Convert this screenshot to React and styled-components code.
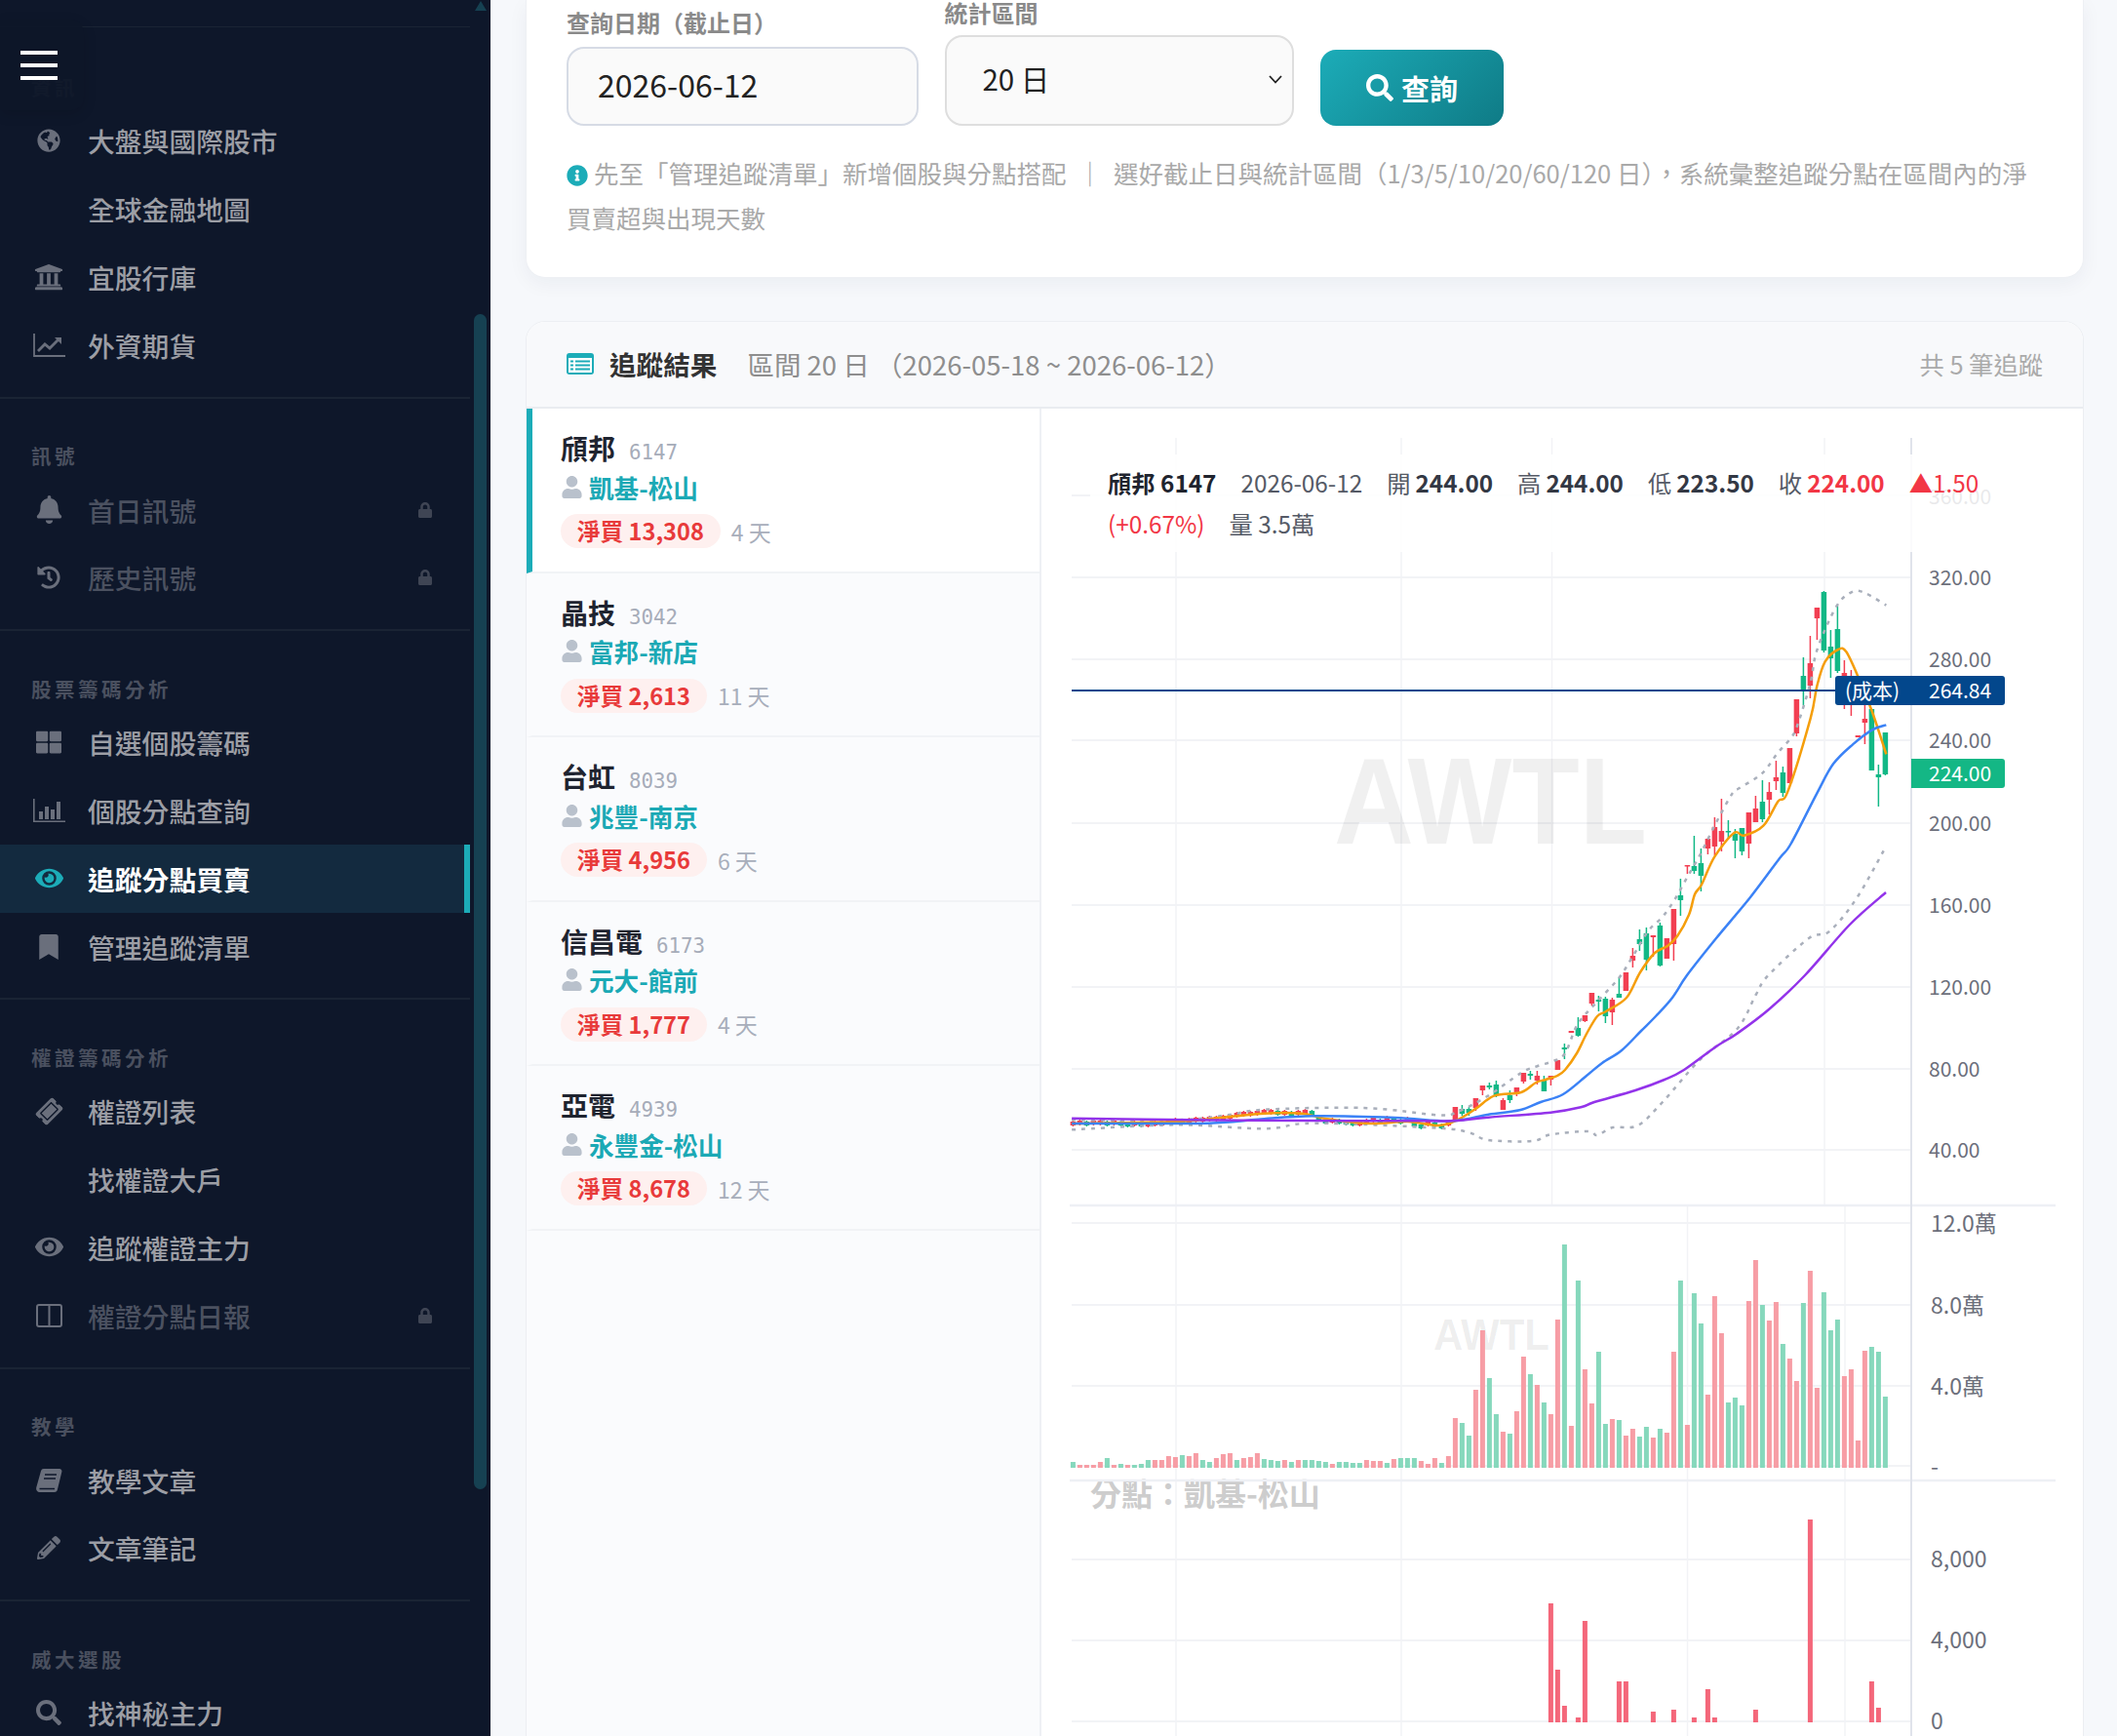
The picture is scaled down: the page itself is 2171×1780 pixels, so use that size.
import React from 'react';
import styled, { createGlobalStyle } from 'styled-components';
import {
  FaBell, FaBookmark, FaEye, FaGlobeAmericas, FaHistory, FaInfoCircle, FaLock,
  FaPencilAlt, FaSearch, FaThLarge, FaTicketAlt, FaUniversity, FaUser,
} from 'react-icons/fa';

const GlobalStyle = createGlobalStyle`
  html, body {
    margin: 0;
    background: #f6f8fb;
    overflow: hidden;
    font-family: "Noto Sans CJK TC", "Noto Sans", "Liberation Sans", sans-serif;
  }
  * { box-sizing: border-box; }
`;

const Page = styled.div`
  display: flex;
  width: 2171px;
  height: 1780px;
  overflow: hidden;
`;

/* ---------- sidebar ---------- */

const Sidebar = styled.aside`
  position: relative;
  flex: 0 0 503px;
  display: flex;
  height: 100%;
  background: #0e172a;
  overflow: hidden;
`;

const Nav = styled.nav`
  flex: 0 0 482px;
  padding-top: 27px;
`;

const NavSection = styled.section`
  padding: ${(p) => (p.$first ? '50px' : '47.5px')} 0 17.5px;
  border-top: ${(p) => (p.$first ? '1px solid #1a2434' : 'none')};
  border-bottom: 2px solid #1a2434;
`;

const NavLabel = styled.div`
  height: 22px;
  margin-bottom: 10px;
  padding-left: 32px;
  font-size: 20.5px;
  line-height: 22px;
  font-weight: 700;
  letter-spacing: 3.5px;
  color: #4a505f;
`;

const NavItem = styled.div`
  display: flex;
  align-items: center;
  height: 69.8px;
  padding: 0 38px 1px 32px;
  font-size: 27.8px;
  font-weight: ${(p) => (p.$active ? 700 : 500)};
  color: ${(p) => (p.$active ? '#ffffff' : p.$muted ? '#4b5160' : '#9c9ea5')};
  background: ${(p) => (p.$active ? '#132a3f' : 'transparent')};
  box-shadow: ${(p) => (p.$active ? 'inset -6px 0 0 #1cacb8' : 'none')};
`;

const NavIcon = styled.span`
  flex: 0 0 36px;
  display: flex;
  align-items: center;
  justify-content: center;
  margin-right: 22px;
  color: ${(p) => (p.$active ? '#1cacb8' : '#6a6f7c')};
  font-size: 26px;
  svg { transform: ${(p) => (p.$tilt ? 'rotate(-45deg)' : 'none')}; }
`;

const LockMark = styled(FaLock)`
  margin-left: auto;
  font-size: 16px;
  color: #3f4554;
`;

const ScrollTrack = styled.div`
  flex: 1;
  display: flex;
  flex-direction: column;
  align-items: center;
  padding: 0 4px;
`;

const ScrollArrow = styled.div`
  width: 0;
  height: 0;
  margin-top: 1px;
  border-left: 6.5px solid transparent;
  border-right: 6.5px solid transparent;
  border-bottom: 10px solid #164152;
`;

const ScrollThumb = styled.div`
  width: 13px;
  height: 1205px;
  margin-top: 311px;
  border-radius: 7px;
  background: #164152;
`;

const MenuToggle = styled.button`
  position: absolute;
  top: 20px;
  left: 0;
  width: 86px;
  height: 93px;
  display: flex;
  flex-direction: column;
  align-items: flex-start;
  justify-content: center;
  gap: 9px;
  padding: 0 0 0 21px;
  border: none;
  border-radius: 0 14px 14px 0;
  background: rgba(14, 22, 40, 0.94);
  box-shadow: 0 4px 14px rgba(0, 0, 0, 0.12);
`;

const MenuBar = styled.span`
  width: 38px;
  height: 4px;
  background: #ffffff;
`;

/* ---------- main column ---------- */

const Main = styled.main`
  flex: 1;
  padding: 0 34px 0 36px;
  min-width: 0;
`;

const FilterCard = styled.section`
  padding: 0 41px 38px;
  background: #ffffff;
  border: 1px solid #eef0f4;
  border-top: none;
  border-radius: 0 0 20px 20px;
  box-shadow: 0 6px 20px rgba(20, 40, 80, 0.05);
`;

const FilterRow = styled.div`
  display: flex;
  align-items: flex-end;
  gap: 26.5px;
  height: 129px;
`;

const Field = styled.div`
  display: flex;
  flex-direction: column;
  gap: ${(p) => p.$gap}px;
  width: ${(p) => p.$width}px;
`;

const FieldLabel = styled.label`
  font-size: 24px;
  line-height: 26px;
  font-weight: 600;
  color: #8a8a8a;
`;

const DateInput = styled.input`
  width: 100%;
  height: 81px;
  padding: 0 30px 6px;
  border: 2px solid #d6dbe5;
  border-radius: 18px;
  background: #fafafa;
  font: inherit;
  font-size: 32px;
  color: #222;
  outline: none;
`;

const SelectBox = styled.div`
  position: relative;
  height: 93px;
`;

const RangeSelect = styled.select`
  width: 100%;
  height: 100%;
  padding: 0 37px 6px;
  border: 2px solid #dedede;
  border-radius: 18px;
  appearance: none;
  background: #fafafa;
  font: inherit;
  font-size: 29.5px;
  color: #222;
  outline: none;
`;

const SelectChevron = styled.svg`
  position: absolute;
  top: 41px;
  right: 12px;
  pointer-events: none;
`;

const QueryButton = styled.button`
  display: flex;
  align-items: center;
  justify-content: center;
  gap: 8px;
  width: 188px;
  height: 78px;
  margin-left: 1px;
  border: none;
  border-radius: 16px;
  background: linear-gradient(135deg, #1cacb8, #0f7b86);
  color: #ffffff;
  font: inherit;
  font-size: 29px;
  font-weight: 700;
`;

const Hint = styled.p`
  margin: 25px 0 0;
  font-size: 25.5px;
  line-height: 46px;
  color: #a9a9a9;
  svg {
    color: #1cacb8;
    font-size: 22px;
    margin-right: 6px;
    vertical-align: -3px;
  }
`;

const ResultCard = styled.section`
  display: flex;
  flex-direction: column;
  height: 1500px;
  margin-top: 44px;
  background: #ffffff;
  border: 1px solid #eceef2;
  border-radius: 20px 20px 0 0;
  overflow: hidden;
`;

const ResultHeader = styled.header`
  flex: 0 0 89px;
  display: flex;
  align-items: center;
  padding: 0 41px 1px;
  background: #f8f9fb;
  border-bottom: 2px solid #e9ecf0;
`;

const ListIcon = styled.svg`
  margin-right: 16px;
  color: #1cacb8;
`;

const ResultTitle = styled.h2`
  margin: 0 31px 0 0;
  font-size: 27.6px;
  font-weight: 700;
  color: #333;
`;

const ResultRange = styled.span`
  font-size: 27.5px;
  color: #8e8e8e;
`;

const ResultCount = styled.span`
  margin-left: auto;
  font-size: 25.3px;
  color: #aaaaaa;
`;

const ResultBody = styled.div`
  flex: 1;
  display: flex;
  min-height: 0;
`;

const StockList = styled.div`
  flex: 0 0 528px;
  background: #fafbfd;
  border-right: 2px solid #eef0f4;
`;

const StockRow = styled.article`
  padding: 20px 20px 23.5px 29px;
  background: ${(p) => (p.$active ? '#ffffff' : 'transparent')};
  border-left: 6px solid ${(p) => (p.$active ? '#1cacb8' : 'transparent')};
  border-bottom: 2px solid #f1f3f6;
`;

const StockName = styled.div`
  display: flex;
  align-items: baseline;
  gap: 14px;
  height: 40px;
  font-size: 28px;
  line-height: 40px;
  font-weight: 700;
  color: #1f2430;
`;

const StockCode = styled.span`
  font-family: "DejaVu Sans Mono", "Liberation Mono", monospace;
  font-size: 20.8px;
  font-weight: 400;
  color: #a6acb9;
`;

const BrokerLine = styled.div`
  display: flex;
  align-items: center;
  gap: 6px;
  height: 40px;
  font-size: 25.6px;
  font-weight: 600;
  color: #1ba9b5;
  svg {
    color: #b9c1cc;
    font-size: 23px;
  }
`;

const StatLine = styled.div`
  display: flex;
  align-items: center;
  gap: 11px;
  margin-top: 8px;
`;

const NetBadge = styled.span`
  height: 35px;
  padding: 0 17px;
  border-radius: 18px;
  background: #fef0ef;
  font-size: 23.6px;
  line-height: 35px;
  font-weight: 600;
  color: #e83a3a;
`;

const DayCount = styled.span`
  font-size: 23px;
  color: #a8aebb;
`;

const ChartPane = styled.div`
  position: relative;
  flex: 1;
  min-width: 0;
  background: #ffffff;
`;

const ChartSvg = styled.svg`
  display: block;
  font-family: "Noto Sans CJK TC", "Noto Sans", sans-serif;
`;

const Legend = styled.div`
  position: absolute;
  top: 47px;
  left: 50px;
  width: 945px;
  padding: 8px 18px;
  display: flex;
  flex-wrap: wrap;
  column-gap: 25px;
  background: rgba(255, 255, 255, 0.85);
  font-size: 24.3px;
  line-height: 42px;
  color: #555a66;
`;

const LegendTitle = styled.b`
  font-weight: 700;
  color: #20242e;
`;

const LegendValue = styled.b`
  margin-left: 5px;
  font-weight: 700;
  color: ${(p) => (p.$up ? '#f23645' : '#333844')};
`;

const LegendChange = styled.span`
  color: #f23645;
`;

/* ---------- chart data, all in page pixels ---------- */

const barX = (i) => 1100.4 + 7 * i;

// readings from the lower part of the chart and from the upper right part
const low = (pts) => pts.map(([x, y]) => [1080 + x / 1.568, 1000 + y / 3]);
const high = (pts) => pts.map(([x, y]) => [1700 + x / 3, 580 + y / 3]);

const purpleLine = [
  ...low([[30, 440], [220, 445], [400, 447], [600, 448], [650, 447], [700, 437], [800, 422], [850, 405]]),
  [1635, 1130], [1677, 1118], [1707, 1107], [1727, 1097], [1760, 1073], [1781, 1060],
  [1814, 1035], [1851, 1000], [1897, 948], [1934, 915],
];
const blueLine = [
  ...low([[30, 456], [250, 455], [330, 443], [420, 433], [550, 438], [640, 448], [700, 428], [750, 415]]),
  [1580, 1130], [1603, 1122], [1627, 1103], [1643, 1090], [1663, 1077], [1683, 1057], [1698, 1042],
  [1715, 1023], [1730, 1000], [1760, 962], [1795, 920],
  ...high([[375, 900], [410, 855], [490, 700], [540, 610], [600, 550], [660, 505], [703, 490]]),
];
const orangeLine = [
  ...low([[30, 456], [200, 450], [270, 438], [340, 425], [400, 425], [440, 442], [510, 456], [570, 450], [620, 462], [650, 445], [680, 410], [710, 370]]),
  [1560, 1120], [1575, 1110], [1585, 1107], [1597, 1103], [1605, 1097], [1617, 1080], [1627, 1060],
  [1638, 1042], [1647, 1037], [1668, 1023], [1682, 997], [1697, 977], [1710, 970], [1720, 960],
  [1732, 938], [1738, 917], [1745, 907],
  ...high([[175, 895], [235, 822], [265, 830], [325, 800], [370, 725], [400, 695], [470, 470], [490, 370], [515, 295], [555, 258], [580, 265], [620, 350], [660, 450], [703, 580]]),
];
const upperBand = [
  ...low([[30, 445], [200, 445], [280, 430], [340, 413], [500, 408], [620, 430], [650, 420], [700, 370]]),
  [1560, 1100], [1577, 1093], [1593, 1088], [1605, 1080], [1618, 1050], [1638, 1027], [1660, 1003],
  [1673, 983], [1690, 955], [1705, 940], [1717, 923], [1730, 900],
  ...high([[130, 890], [180, 790], [230, 700], [250, 685], [320, 640], [370, 575], [410, 530], [430, 490], [470, 360], [490, 260], [550, 125], [600, 80], [640, 85], [703, 122]]),
];
const lowerBand = [
  ...low([[30, 475], [200, 460], [340, 472], [420, 455], [620, 470], [670, 485], [700, 507], [770, 510], [800, 490], [860, 480], [875, 492], [900, 468], [940, 462], [980, 390], [1040, 260], [1100, 165], [1130, 60], [1150, 0]]),
  [1855, 962], [1876, 955], [1904, 921], [1934, 868],
];

// flat start of the series: only the body centre matters at this scale
const flatMids = [
  1152, 1151, 1152, 1151, 1151, 1152, 1151, 1152, 1153, 1152,
  1153, 1153, 1152, 1152, 1150, 1149, 1150, 1149, 1148, 1148,
  1147, 1147, 1146, 1145, 1143, 1142, 1142, 1141, 1140, 1140,
  1141, 1141, 1142, 1141, 1140, 1141, 1146, 1150, 1149, 1150,
  1151, 1152, 1152, 1150, 1148, 1150, 1147, 1148, 1150, 1148,
  1153, 1155, 1152, 1153, 1155, 1152,
];
const flatCandles = flatMids.map((mid, i) => {
  const up = i === 0 ? true : mid <= flatMids[i - 1];
  return [up ? 'r' : 'g', mid - 3, mid - 2, mid + 2, mid + 3];
});

// colour, high, body top, body bottom, low
const liveCandles = [
  ['r', 1135, 1135, 1148, 1149], ['g', 1133, 1137, 1142, 1144], ['g', 1135, 1137, 1141, 1144],
  ['r', 1126, 1126, 1136, 1139], ['r', 1113, 1113, 1118, 1123], ['g', 1110, 1113, 1115, 1117],
  ['g', 1108, 1112, 1123, 1125], ['r', 1126, 1128, 1138, 1138], ['g', 1118, 1123, 1128, 1131],
  ['r', 1115, 1115, 1122, 1124], ['r', 1100, 1100, 1109, 1111], ['g', 1098, 1101, 1103, 1107],
  ['r', 1098, 1103, 1108, 1112], ['g', 1103, 1107, 1119, 1119], ['r', 1103, 1103, 1107, 1113],
  ['r', 1087, 1087, 1097, 1097], ['g', 1070, 1074, 1076, 1086], ['r', 1057, 1057, 1059, 1059],
  ['g', 1043, 1054, 1062, 1063], ['r', 1041, 1041, 1047, 1048], ['r', 1018, 1018, 1029, 1031],
  ['g', 1021, 1025, 1027, 1037], ['g', 1022, 1024, 1042, 1049], ['r', 1023, 1025, 1038, 1051],
  ['g', 1002, 1019, 1023, 1023], ['r', 997, 997, 1016, 1016], ['r', 972, 980, 985, 992],
  ['g', 953, 963, 968, 975], ['g', 951, 957, 984, 995], ['r', 959, 959, 961, 981],
  ['g', 946, 949, 990, 991], ['r', 962, 962, 983, 983], ['r', 932, 932, 968, 985],
  ['g', 901, 918, 923, 939], ['r', 887, 887, 888, 896], ['g', 857, 888, 893, 896],
  ['g', 870, 885, 898, 914], ['r', 860, 860, 870, 876], ['r', 838, 848, 868, 877],
  ['r', 819, 852, 863, 873], ['g', 841, 852, 853, 860], ['g', 850, 855, 862, 880],
  ['g', 849, 849, 873, 877], ['r', 833, 833, 865, 880], ['r', 816, 829, 843, 843],
  ['g', 800, 822, 840, 843], ['r', 802, 812, 820, 835], ['r', 780, 797, 801, 810],
  ['g', 786, 792, 813, 817], ['r', 767, 767, 803, 803], ['r', 717, 717, 752, 755],
  ['g', 674, 693, 708, 723], ['r', 652, 680, 703, 716], ['r', 623, 623, 634, 656],
  ['g', 606, 607, 667, 669], ['g', 646, 663, 675, 695], ['g', 621, 645, 688, 690],
  ['r', 677, 690, 700, 727], ['r', 687, 700, 705, 734], ['r', 754, 754, 756, 756],
  ['r', 713, 737, 741, 763], ['g', 727, 727, 790, 790], ['g', 784, 794, 797, 827],
  ['g', 751, 751, 794, 795],
];
const candles = [...flatCandles, ...liveCandles];

const volumeTops = [
  'g807', 'r816', 'r816', 'r816', 'r807', 'g795', 'r816', 'g813', 'r816', 'g816',
  'g813', 'g801', 'r801', 'r801', 'r789', 'r792', 'g786', 'r789', 'r780', 'g801',
  'g807', 'r795', 'r783', 'r780', 'g801', 'r795', 'r792', 'r780', 'g798', 'g801',
  'g804', 'r801', 'g807', 'r801', 'g801', 'g801', 'g804', 'g807', 'r813', 'g807',
  'g807', 'g810', 'g810', 'r801', 'r804', 'r804', 'g810', 'r798', 'g795', 'g795',
  'g795', 'r804', 'r813', 'r795', 'g810', 'r789', 'r672', 'g687', 'g726', 'r585',
  'r402', 'g549', 'g660', 'r714', 'g720', 'r651', 'r483', 'g537', 'r570', 'g624',
  'r660', 'r369', 'g138', 'r696', 'g249', 'r522', 'r627', 'g468', 'g690', 'r675',
  'g678', 'r726', 'r705', 'g729', 'g699', 'r732', 'g705', 'r717', 'r468', 'g249',
  'r693', 'g288', 'g381', 'r600', 'r297', 'r411', 'g624', 'g609', 'g633', 'r312',
  'r186', 'g324', 'r372', 'r315', 'g444', 'r489', 'r558', 'g318', 'r219', 'r579',
  'g285', 'g402', 'g369', 'r543', 'r522', 'r741', 'r465', 'g453', 'g468', 'g606',
];

// index of the bar, top in page pixels
const brokerBars = [
  [70, 1644], [71, 1712], [72, 1749], [74, 1761], [75, 1662], [80, 1724], [81, 1724], [85, 1755],
  [88, 1753], [91, 1761], [93, 1732], [94, 1761], [100, 1753], [108, 1558], [117, 1724], [118, 1751],
];

const priceTicks = [
  ['320.00', 592], ['280.00', 676], ['240.00', 759], ['200.00', 844],
  ['160.00', 928], ['120.00', 1012], ['80.00', 1096], ['40.00', 1179],
];
const volumeTicks = [['12.0萬', 1254], ['8.0萬', 1338], ['4.0萬', 1421], ['-', 1503]];
const brokerTicks = [['8,000', 1599], ['4,000', 1682], ['0', 1765]];

const smoothPath = (pts) => {
  let d = `M${pts[0][0]} ${pts[0][1]}`;
  for (let i = 0; i < pts.length - 1; i++) {
    const a = pts[i - 1] || pts[i];
    const b = pts[i];
    const c = pts[i + 1];
    const e = pts[i + 2] || c;
    d += `C${b[0] + (c[0] - a[0]) / 6} ${b[1] + (c[1] - a[1]) / 6} ${c[0] - (e[0] - b[0]) / 6} ${c[1] - (e[1] - b[1]) / 6} ${c[0]} ${c[1]}`;
  }
  return d;
};

const GRID = '#f2f3f6';
const AXIS_TEXT = '#6c6f7b';
const UP = '#f23f52';
const DOWN = '#12b886';

const VGrid = ({ xs, from, to }) =>
  xs.map((x) => <line key={x} x1={x} x2={x} y1={from} y2={to} stroke={GRID} strokeWidth="1.5" />);

const HGrid = ({ ticks }) =>
  ticks.map(([label, y]) => <line key={label} x1="1099" x2="1960" y1={y} y2={y} stroke={GRID} strokeWidth="2" />);

const AxisText = ({ ticks, x, size, drop }) =>
  ticks.map(([label, y]) => (
    <text key={label} x={x} y={y + drop} fontSize={size} fill={AXIS_TEXT}>{label}</text>
  ));

const Chart = () => (
  <ChartSvg width="1068" height="1362" viewBox="1068 419 1068 1362">
    <VGrid xs={[1206, 1437, 1591.5, 1871]} from={449} to={1236} />
    <VGrid xs={[1206, 1437, 1730.5, 1892]} from={1236} to={1785} />
    <line x1="1099" x2="1960" y1="508" y2="508" stroke={GRID} strokeWidth="2" />
    <HGrid ticks={priceTicks} />
    <HGrid ticks={volumeTicks} />
    <HGrid ticks={brokerTicks} />

    <text x="1368" y="865" fontSize="126" fontWeight="700" textLength="321" lengthAdjust="spacingAndGlyphs" fontFamily="Liberation Sans, sans-serif" fill="#000" fillOpacity="0.06">AWTL</text>
    <text x="1470" y="1384" fontSize="44" fontWeight="700" textLength="119" lengthAdjust="spacingAndGlyphs" fontFamily="Liberation Sans, sans-serif" fill="#000" fillOpacity="0.07">AWTL</text>

    {candles.map(([c, hi, top, bottom, lo], i) => (
      <g key={i} fill={c === 'r' ? UP : DOWN}>
        <rect x={barX(i) - 0.75} y={hi} width="1.5" height={lo - hi} />
        <rect x={barX(i) - 2.75} y={top} width="5.5" height={Math.max(bottom - top, 1.5)} />
      </g>
    ))}

    <path d={smoothPath(upperBand)} fill="none" stroke="#a9afbb" strokeWidth="2.5" strokeDasharray="4 6" />
    <path d={smoothPath(lowerBand)} fill="none" stroke="#a9afbb" strokeWidth="2.5" strokeDasharray="4 6" />
    <path d={smoothPath(orangeLine)} fill="none" stroke="#f59e0b" strokeWidth="2.5" />
    <path d={smoothPath(blueLine)} fill="none" stroke="#3b82f6" strokeWidth="2.5" />
    <path d={smoothPath(purpleLine)} fill="none" stroke="#9333ea" strokeWidth="2.5" />

    {volumeTops.map((v, i) => {
      const top = 1230 + Number(v.slice(1)) / 3;
      return (
        <rect key={i} x={barX(i) - 2.5} y={top} width="5" height={1505 - top} fill={v[0] === 'r' ? '#f79da5' : '#86d8bc'} />
      );
    })}

    {brokerBars.map(([i, top]) => (
      <rect key={i} x={barX(i) - 2.5} y={top} width="5" height={1766 - top} fill="#f4677a" />
    ))}
    <text x="1118" y="1544" fontSize="32" fontWeight="700" fill="#cdcdcd">分點：凱基-松山</text>

    <line x1="1097" x2="2108" y1="1236" y2="1236" stroke="#eef0f5" strokeWidth="2.5" />
    <line x1="1097" x2="2108" y1="1518" y2="1518" stroke="#eef0f5" strokeWidth="2.5" />
    <line x1="1960" x2="1960" y1="449" y2="1785" stroke="#e0e3eb" strokeWidth="2" />

    <text x="1978" y="517" fontSize="21" fill={AXIS_TEXT}>360.00</text>
    <AxisText ticks={priceTicks} x={1978} size={21} drop={7.5} />
    <AxisText ticks={volumeTicks} x={1980} size={23} drop={9} />
    <AxisText ticks={brokerTicks} x={1980} size={23} drop={8} />

    <line x1="1099" x2="1882" y1="708" y2="708" stroke="#03478c" strokeWidth="2" />
    <rect x="1882" y="693" width="174" height="30" rx="3" fill="#03478c" />
    <text x="1892" y="716" fontSize="21" fill="#fff">(成本)</text>
    <text x="1978" y="716" fontSize="21" fill="#fff">264.84</text>
    <path d="M1960 778H2053a3 3 0 0 1 3 3V805a3 3 0 0 1 -3 3H1960Z" fill="#14b785" />
    <text x="1978" y="801" fontSize="21" fill="#fff">224.00</text>
  </ChartSvg>
);

/* ---------- icons the package does not have in this shape ---------- */

const LineChartIcon = () => (
  <svg width="33" height="24" viewBox="0 0 33 24" fill="none" stroke="currentColor">
    <path d="M1 0V23H33" strokeWidth="1.8" />
    <path d="M5 18L12 11L17 15L26 6" strokeWidth="2.8" />
    <path d="M22 4H29V11Z" fill="currentColor" stroke="none" />
  </svg>
);

const BarChartIcon = () => (
  <svg width="33" height="24" viewBox="0 0 33 24" fill="currentColor">
    <path d="M0 0H1.6V22.400H33V24H0Z" />
    <rect x="6" y="13" width="4" height="8" />
    <rect x="12" y="8" width="4" height="13" />
    <rect x="18" y="11" width="4" height="10" />
    <rect x="24" y="3" width="4" height="18" />
  </svg>
);

const ColumnsIcon = () => (
  <svg width="27" height="24" viewBox="0 0 27 24" fill="none" stroke="currentColor" strokeWidth="2">
    <rect x="1" y="1" width="25" height="22" rx="2" />
    <path d="M13.5 1V23" />
  </svg>
);

const BookIcon = () => (
  <svg width="27" height="24" viewBox="0 0 27 24" fill="currentColor">
    <path d="M8 0H24a2.500 2.500 0 0 1 2.400 3L22 21a3.500 3.500 0 0 1-3.400 3H3.500C1 24 -0.400 21.500 0.300 19L5 2.200A3 3 0 0 1 8 0Z" />
    <path d="M9 6H21M8 10H20M3.500 20.500H19" stroke="#0e172a" strokeWidth="1.6" fill="none" />
  </svg>
);

/* ---------- content ---------- */

const navSections = [
  {
    label: '資訊',
    items: [
      { text: '大盤與國際股市', icon: <FaGlobeAmericas size={24} /> },
      { text: '全球金融地圖' },
      { text: '宜股行庫', icon: <FaUniversity size={30} /> },
      { text: '外資期貨', icon: <LineChartIcon /> },
    ],
  },
  {
    label: '訊號',
    items: [
      { text: '首日訊號', icon: <FaBell size={29} />, locked: true },
      { text: '歷史訊號', icon: <FaHistory size={24} />, locked: true },
    ],
  },
  {
    label: '股票籌碼分析',
    items: [
      { text: '自選個股籌碼', icon: <FaThLarge /> },
      { text: '個股分點查詢', icon: <BarChartIcon /> },
      { text: '追蹤分點買賣', icon: <FaEye size={29} />, active: true },
      { text: '管理追蹤清單', icon: <FaBookmark size={26} /> },
    ],
  },
  {
    label: '權證籌碼分析',
    items: [
      { text: '權證列表', icon: <FaTicketAlt size={25} />, tilt: true },
      { text: '找權證大戶' },
      { text: '追蹤權證主力', icon: <FaEye size={29} /> },
      { text: '權證分點日報', icon: <ColumnsIcon />, locked: true },
    ],
  },
  {
    label: '教學',
    items: [
      { text: '教學文章', icon: <BookIcon /> },
      { text: '文章筆記', icon: <FaPencilAlt size={24} /> },
    ],
  },
  {
    label: '威大選股',
    items: [{ text: '找神秘主力', icon: <FaSearch /> }],
  },
];

const stocks = [
  { name: '頎邦', code: '6147', broker: '凱基-松山', net: '13,308', days: 4, active: true },
  { name: '晶技', code: '3042', broker: '富邦-新店', net: '2,613', days: 11 },
  { name: '台虹', code: '8039', broker: '兆豐-南京', net: '4,956', days: 6 },
  { name: '信昌電', code: '6173', broker: '元大-館前', net: '1,777', days: 4 },
  { name: '亞電', code: '4939', broker: '永豐金-松山', net: '8,678', days: 12 },
];

const App = () => (
  <Page>
    <GlobalStyle />
    <Sidebar>
      <Nav>
        {navSections.map((section, s) => (
          <NavSection key={section.label} $first={s === 0}>
            <NavLabel>{section.label}</NavLabel>
            {section.items.map((item) => (
              <NavItem key={item.text} $active={item.active} $muted={item.locked}>
                <NavIcon $active={item.active} $tilt={item.tilt}>{item.icon}</NavIcon>
                {item.text}
                {item.locked && <LockMark />}
              </NavItem>
            ))}
          </NavSection>
        ))}
      </Nav>
      <ScrollTrack>
        <ScrollArrow />
        <ScrollThumb />
      </ScrollTrack>
      <MenuToggle aria-label="menu">
        <MenuBar />
        <MenuBar />
        <MenuBar />
      </MenuToggle>
    </Sidebar>

    <Main>
      <FilterCard>
        <FilterRow>
          <Field $width={361} $gap={12}>
            <FieldLabel>查詢日期（截止日）</FieldLabel>
            <DateInput defaultValue="2026-06-12" />
          </Field>
          <Field $width={358} $gap={10}>
            <FieldLabel>統計區間</FieldLabel>
            <SelectBox>
              <RangeSelect defaultValue="20">
                {[1, 3, 5, 10, 20, 60, 120].map((d) => (
                  <option key={d} value={d}>{d} 日</option>
                ))}
              </RangeSelect>
              <SelectChevron width="14" height="9" viewBox="0 0 14 9" fill="none" stroke="#222" strokeWidth="1.8">
                <path d="M1 1L7 7.500L13 1" />
              </SelectChevron>
            </SelectBox>
          </Field>
          <QueryButton>
            <FaSearch size={28} />
            查詢
          </QueryButton>
        </FilterRow>
        <Hint>
          <FaInfoCircle />
          先至「管理追蹤清單」新增個股與分點搭配{'\u00a0\u00a0'}｜{'\u00a0\u00a0'}選好截止日與統計區間（1/3/5/10/20/60/120 日），系統彙整追蹤分點在區間內的淨買賣超與出現天數
        </Hint>
      </FilterCard>

      <ResultCard>
        <ResultHeader>
          <ListIcon width="28" height="22" viewBox="0 0 28 22">
            <rect width="28" height="22" rx="3" fill="currentColor" />
            <rect x="2" y="5" width="24" height="15" fill="#ffffff" />
            <path d="M4 8.500H7M9 8.500H24M4 12.500H7M9 12.500H24M4 16.500H7M9 16.500H24" stroke="currentColor" strokeWidth="2" />
          </ListIcon>
          <ResultTitle>追蹤結果</ResultTitle>
          <ResultRange>區間 20 日 （2026-05-18 ~ 2026-06-12）</ResultRange>
          <ResultCount>共 5 筆追蹤</ResultCount>
        </ResultHeader>
        <ResultBody>
          <StockList>
            {stocks.map((s) => (
              <StockRow key={s.code} $active={s.active}>
                <StockName>
                  {s.name}
                  <StockCode>{s.code}</StockCode>
                </StockName>
                <BrokerLine>
                  <FaUser />
                  {s.broker}
                </BrokerLine>
                <StatLine>
                  <NetBadge>淨買 {s.net}</NetBadge>
                  <DayCount>{s.days} 天</DayCount>
                </StatLine>
              </StockRow>
            ))}
          </StockList>
          <ChartPane>
            <Chart />
            <Legend>
              <LegendTitle>頎邦 6147</LegendTitle>
              <span>2026-06-12</span>
              <span>開<LegendValue>244.00</LegendValue></span>
              <span>高<LegendValue>244.00</LegendValue></span>
              <span>低<LegendValue>223.50</LegendValue></span>
              <span>收<LegendValue $up>224.00</LegendValue></span>
              <LegendChange>▲1.50</LegendChange>
              <LegendChange>(+0.67%)</LegendChange>
              <span>量 3.5萬</span>
            </Legend>
          </ChartPane>
        </ResultBody>
      </ResultCard>
    </Main>
  </Page>
);

export default App;
